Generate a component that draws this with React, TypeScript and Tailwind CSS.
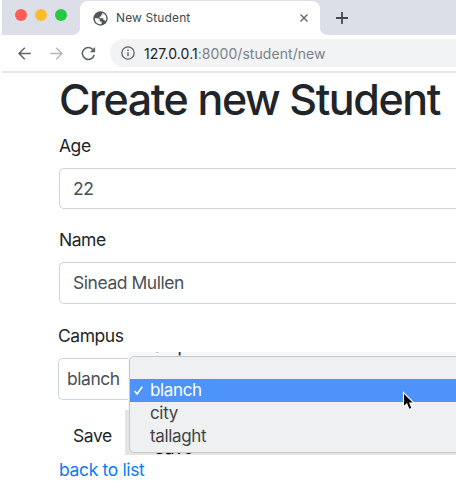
import React from "react";

function Globe() {
  return (
    <svg className="size-[15px] shrink-0" viewBox="0 0 15 15">
      <circle cx="7.5" cy="7.5" r="7.2" fill="#50555a" />
      <path d="M1.8 7.3H4.6Q6.8 7.3 6.8 9.3V10.4H8.6V13.2C4.8 13.9 1.6 11 1.8 7.3Z" fill="#fff" />
      <path d="M9 1.9C11.8 2.6 13.5 4.9 13.4 7.6 13.3 8.7 13 9.4 12.5 10.2 11.8 9.3 11.2 9 10.4 9V7.3H6.6V5.4H8.2V3.8H9.4Z" fill="#fff" />
    </svg>
  );
}

function TabBar() {
  return (
    <div className="flex h-[35px] bg-[#dcdfe7]">
      <div className="flex w-[78px] gap-[8px] pt-[9px] pl-[13px]">
        <span className="size-3 rounded-full bg-[#fd5d56]" />
        <span className="size-3 rounded-full bg-[#fdbc2e]" />
        <span className="size-3 rounded-full bg-[#28c840]" />
      </div>
      <div className="relative mt-px flex h-[34px] w-[240px] items-center rounded-t-[8px] bg-white pr-[12px] pl-[13px]">
        <svg className="absolute bottom-0 -left-2 size-2" viewBox="0 0 8 8"><path d="M8 0Q8 8 0 8H8Z" fill="#fff" /></svg>
        <svg className="absolute -right-2 bottom-0 size-2" viewBox="0 0 8 8"><path d="M0 0Q0 8 8 8H0Z" fill="#fff" /></svg>
        <Globe />
        <span className="ml-[8px] text-[12px] tracking-[0.01em] text-[#44484c]">New Student</span>
        <svg className="ml-auto size-2" viewBox="0 0 8 8"><path d="M.5.5 7.5 7.5M7.5.5.5 7.5" stroke="#5f6368" strokeWidth="1.4" /></svg>
      </div>
      <svg className="mt-[12px] ml-[16px] size-3" viewBox="0 0 12 12"><path d="M6 0V12M0 6H12" stroke="#45494d" strokeWidth="1.8" /></svg>
    </div>
  );
}

function Toolbar() {
  return (
    <div className="flex h-[38px] items-start border-b-2 border-[#e6e7e8] pt-[4px] pl-[16px]">
      <svg className="mt-[8px] size-[13px]" viewBox="0 0 13 13" fill="none" stroke="#5f6368" strokeWidth="1.5"><path d="M12.8 6.5H1M6.8.7 1 6.5 6.8 12.3" /></svg>
      <svg className="mt-[8px] ml-[19px] size-[13px]" viewBox="0 0 13 13" fill="none" stroke="#b5b8ba" strokeWidth="1.5"><path d="M.2 6.5H12M6.2.7 12 6.5 6.2 12.3" /></svg>
      <svg className="mt-[7px] ml-[18px] size-[15px]" viewBox="0 0 15 15" fill="none"><path d="M12.4 4.2A6 6 0 1 0 13.2 9" stroke="#5f6368" strokeWidth="1.6" /><path d="M14.1 1V6.3H8.8Z" fill="#5f6368" /></svg>
      <div className="ml-[14px] flex h-7 flex-1 items-center rounded-l-full bg-[#f1f3f4] pl-[11px]">
        <svg className="size-[14px] shrink-0" viewBox="0 0 14 14" fill="none" stroke="#5f6368"><circle cx="7" cy="7" r="6.2" strokeWidth="1.3" /><path d="M7 6.2V10.3M7 3.6V5.1" strokeWidth="1.4" /></svg>
        <span className="ml-[9px] text-[14px] tracking-[0.06px] whitespace-nowrap text-[#7b8185]"><span className="text-[#202124]">127.0.0.1</span>:8000/student/new</span>
      </div>
    </div>
  );
}

function Menu() {
  return (
    <div className="absolute top-[352px] left-[128px] h-[103px] w-[328px] bg-[#f8f8f8]">
      <div className="absolute top-[58px] -left-[3px] h-[45px] w-[331px] bg-[#e4e4e4]" />
      <div className="absolute top-0 left-[13px] h-[4px] w-[70px] overflow-hidden">
        <span className="absolute -top-[17px] left-0 text-[17.5px] leading-[22px] tracking-[-0.45px] text-[#212529]">Campus</span>
      </div>
      <div className="absolute bottom-0 left-[26px] h-[4px] w-[60px] overflow-hidden">
        <span className="absolute -top-[14px] left-0 text-[17.5px] leading-[22px] tracking-[-0.4px] text-black">Save</span>
      </div>
      <div className="absolute top-[4px] left-px flex h-[97px] w-[340px] flex-col rounded-[5px] border border-[#c6c7c8] bg-[#eff0f1] pt-[22px] text-[17px] leading-[23px] tracking-[-0.35px] text-[#424345]">
        <div className="flex h-[23px] shrink-0 items-center bg-[#4d93f8] pl-[4px] text-white">
          <svg className="mr-[7px] size-[9px]" viewBox="0 0 9 9" fill="none"><path d="M.7 5 3.1 8 8.3.8" stroke="#fff" strokeWidth="1.6" /></svg>
          <span>blanch</span>
        </div>
        <div className="pl-[20px]">city</div>
        <div className="pl-[20px]">tallaght</div>
      </div>
      <svg className="absolute top-[39px] left-[274px] h-[21px] w-[14px]" viewBox="0 0 14 21"><path d="M1.5 1.5V16L4.8 13 7 18.5 10 17.2 7.8 12H12Z" fill="#000" stroke="#fff" strokeWidth="1.1" /></svg>
    </div>
  );
}

export default function App() {
  return (
    <div className="relative h-[483px] w-[456px] overflow-hidden bg-white pl-[2px] font-['Inter',sans-serif]">
      <TabBar />
      <Toolbar />
      <main className="pl-[57px] text-[17.5px] leading-[24px] tracking-[-0.45px] text-[#212529]">
        <h1 className="h-[61px] text-[43px] leading-[53px] font-medium tracking-[-1.42px] whitespace-nowrap">Create new Student</h1>
        <label className="block">Age</label>
        <div className="mt-[10px] flex h-[41px] items-center rounded-l-[5px] border border-r-0 border-[#ced4da] pl-[13px] text-[#495057]">22</div>
        <label className="mt-[19px] block">Name</label>
        <div className="mt-[10px] flex h-[42px] items-center rounded-l-[5px] border border-r-0 border-[#ced4da] pl-[13px] text-[#495057]">Sinead Mullen</div>
        <div className="-ml-px">
          <label className="mt-[20px] block">Campus</label>
          <div className="mt-[10px] flex h-[42px] items-center rounded-l-[5px] border border-r-0 border-[#ced4da] pl-[8px] text-[#495057]">blanch</div>
        </div>
        <div className="mt-[24px] pl-[14px]">Save</div>
        <a className="mt-[10px] block tracking-[-0.35px] text-[#087bfd]">back to list</a>
      </main>
      <Menu />
    </div>
  );
}
